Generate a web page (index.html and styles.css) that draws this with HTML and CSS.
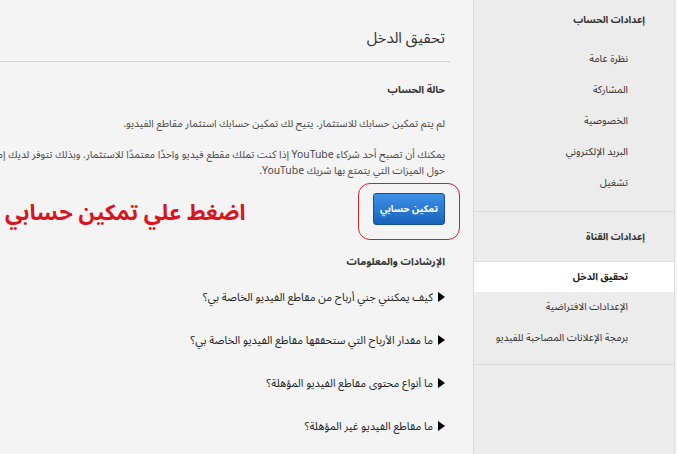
FILE: index.html
```html
<!DOCTYPE html>
<html lang="ar" dir="rtl">
<head>
    <meta charset="UTF-8">
    <title>تحقيق الدخل</title>
    <link rel="stylesheet" href="styles.css">
</head>
<body>

<div class="page">
    <aside class="sidebar">
        <div class="sideGroup">
            <h3 class="sideTitle">إعدادات الحساب</h3>
            <ul class="sideList">
                <li>نظرة عامة</li>
                <li>المشاركة</li>
                <li>الخصوصية</li>
                <li>البريد الإلكتروني</li>
                <li>تشغيل</li>
            </ul>
        </div>
        <div class="sideHead">
            <h3 class="sideTitle">إعدادات القناة</h3>
        </div>
        <div class="sideGroup sideGroupLast">
            <ul class="sideList">
                <li class="active">تحقيق الدخل</li>
                <li>الإعدادات الافتراضية</li>
                <li>برمجة الإعلانات المصاحبة للفيديو</li>
            </ul>
        </div>
    </aside>

    <main class="main">
        <div class="mainInner">
            <div class="pageHead">
                <h1 class="pageTitle">تحقيق الدخل</h1>
            </div>

            <section class="status">
                <h2 class="secTitle">حالة الحساب</h2>
                <p class="text">لم يتم تمكين حسابك للاستثمار. يتيح لك تمكين حسابك استثمار مقاطع الفيديو.</p>
                <p class="text textTwo">يمكنك أن تصبح أحد شركاء YouTube إذا كنت تملك مقطع فيديو واحدًا معتمدًا للاستثمار. وبذلك تتوفر لديك إمكانية الاطلاع على مزيد من المعلومات<br>حول الميزات التي يتمتع بها شريك YouTube.</p>
                <div class="btnWrap">
                    <button class="btnBlue" type="button">تمكين حسابي</button>
                    <span class="ring"></span>
                </div>
            </section>

            <section class="faq">
                <h2 class="secTitle">الإرشادات والمعلومات</h2>
                <ul class="faqList">
                    <li>كيف يمكنني جني أرباح من مقاطع الفيديو الخاصة بي؟</li>
                    <li>ما مقدار الأرباح التي ستحققها مقاطع الفيديو الخاصة بي؟</li>
                    <li>ما أنواع محتوى مقاطع الفيديو المؤهلة؟</li>
                    <li>ما مقاطع الفيديو غير المؤهلة؟</li>
                </ul>
            </section>
        </div>

        <div class="note">اضغط علي تمكين حسابي</div>
    </main>
</div>

</body>
</html>
```

FILE: styles.css
```css
body,h1,h2,h3,p,ul,li{ margin: 0; padding: 0;}
li{ list-style: none;}

body{
    background: #ebebeb;
    font-family: Tahoma, "Noto Sans Arabic", "DejaVu Sans", sans-serif;
    font-size: 11px;
    color: #444;
}
.page{
    display: flex;
    height: 454px;
    padding-right: 2px;
    background: #f4f4f4;
}

/* 侧栏 */
.sidebar{
    width: 200px;
    flex: none;
    background: #ececec;
    border-left: 1px solid #d9d9d9;
    border-right: 1px solid #dcdcdc;
}
.sidebar .sideTitle{
    height: 16px;
    font-size: 9.8px;
    line-height: 16px;
    font-weight: bold;
    color: #333;
    padding-right: 29px;
}
.sidebar .sideGroup{
    padding: 12px 0 12px;
    border-bottom: 1px solid #dadada;
}
.sidebar .sideGroup .sideTitle{
    margin-bottom: 16px;
}
.sidebar .sideHead{
    padding: 17px 0 16px;
    border-bottom: 1px solid #dadada;
}
.sidebar .sideGroupLast{
    padding: 0 0 10px;
}
.sidebar .sideList li{
    height: 31px;
    font-size: 10.2px;
    line-height: 31px;
    padding-right: 46px;
    color: #333;
    white-space: nowrap;
}
.sidebar .sideList .active{
    height: 30px;
    line-height: 30px;
    background: #fff;
    font-weight: bold;
    font-size: 9.8px;
    color: #222;
}

/* 主体 */
.main{
    flex: 1;
    position: relative;
    overflow: hidden;
}
.main .mainInner{
    width: 720px;
    padding-right: 23px;
}
.main .pageHead{
    height: 20px;
    padding: 28px 5px 13px 0;
    border-bottom: 1px solid #d2d2d2;
}
.main .pageTitle{
    font-size: 15px;
    line-height: 20px;
    font-weight: normal;
    color: #333;
}
.main .status,.main .faq{
    padding-right: 5px;
}
.main .secTitle{
    height: 16px;
    font-size: 10.2px;
    line-height: 16px;
    font-weight: bold;
    color: #333;
}
.main .status .secTitle{
    margin-top: 20px;
}
.main .text{
    font-size: 10.4px;
    line-height: 16px;
    margin-top: 18px;
    color: #4a4a4a;
}
.main .textTwo{
    height: 32px;
    margin-top: 15px;
    white-space: nowrap;
}
.main .btnWrap{
    display: flex;
    width: fit-content;
    position: relative;
    margin-top: 14px;
}
.main .btnBlue{
    width: 72px;
    height: 32px;
    padding: 0;
    border: 1px solid #17509a;
    border-radius: 3px;
    background: linear-gradient(#3d91e8, #1a62bc);
    color: #fff;
    font-family: inherit;
    font-size: 9.6px;
    font-weight: bold;
    white-space: nowrap;
    cursor: pointer;
}
.main .ring{
    position: absolute;
    top: -10px;
    right: -15px;
    bottom: -15px;
    left: -15px;
    border: 1px solid #c8242e;
    border-radius: 12px;
}
.main .faq .secTitle{
    margin-top: 29px;
}
.main .faqList{
    padding-top: 20px;
}
.main .faqList li{
    display: flex;
    align-items: flex-start;
    gap: 5px;
    height: 16px;
    line-height: 16px;
    margin-bottom: 27px;
    color: #222;
}
.main .faqList li::before{
    content: "";
    margin-top: 2px;
    border-left: 7px solid #000;
    border-top: 5px solid transparent;
    border-bottom: 5px solid transparent;
}
.main .note{
    position: absolute;
    left: 5px;
    top: 198px;
    font-size: 22px;
    line-height: 30px;
    font-weight: bold;
    color: #d9141c;
}
```
